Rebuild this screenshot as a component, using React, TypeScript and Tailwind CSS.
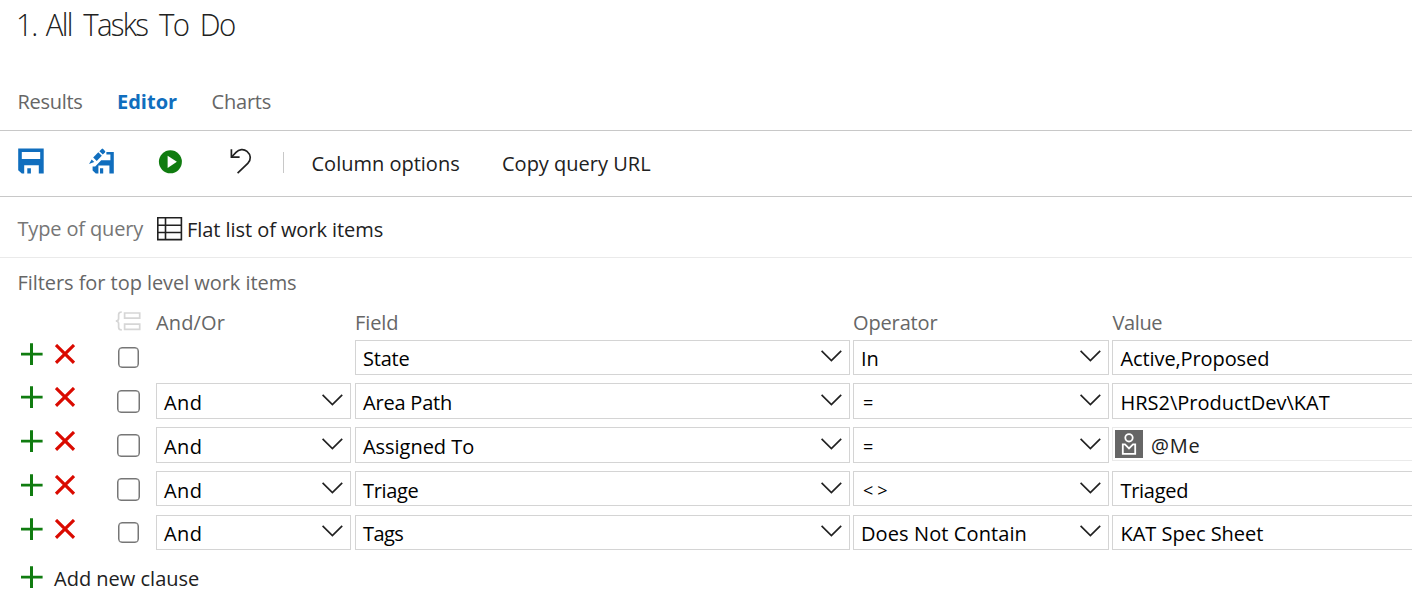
import React from "react";

type Text = { text: string; className?: string };
type Clause = {
  height: string;
  box: string;
  line: string;
  check: string;
  logical?: Text;
  field: Text;
  operator: Text;
  value: Text;
  person?: boolean;
};

const TALL = { box: "h-[36px]", line: "pt-px", check: "ml-[42px] size-[23px]" };
const SHORT = { box: "h-[35px]", line: "", check: "ml-[43px] size-[21px]" };
const AND: Text = { text: "And", className: "tracking-[0.4px]" };

const clauses: Clause[] = [
  {
    height: "h-[43px]",
    ...SHORT,
    field: { text: "State", className: "tracking-[-0.2px]" },
    operator: { text: "In" },
    value: { text: "Active,Proposed", className: "tracking-[-0.1px]" },
  },
  {
    height: "h-[44px]",
    ...TALL,
    logical: AND,
    field: { text: "Area Path", className: "tracking-[-0.2px]" },
    operator: { text: "=", className: "pl-[2px] text-[18px]" },
    value: { text: "HRS2\\ProductDev\\KAT", className: "tracking-[0px]" },
  },
  {
    height: "h-[44px]",
    ...TALL,
    logical: AND,
    field: { text: "Assigned To", className: "tracking-[-0.04px]" },
    operator: { text: "=", className: "pl-[2px] text-[18px]" },
    value: { text: "@Me", className: "tracking-[0.8px]" },
    person: true,
  },
  {
    height: "h-[44px]",
    ...TALL,
    box: "h-[35px]",
    logical: AND,
    field: { text: "Triage", className: "tracking-[-0.35px]" },
    operator: { text: "<>", className: "pl-[2px] text-[18px] tracking-[4px]" },
    value: { text: "Triaged", className: "tracking-[-0.3px]" },
  },
  {
    height: "h-[44px]",
    ...SHORT,
    logical: AND,
    field: { text: "Tags", className: "tracking-[-0.6px]" },
    operator: { text: "Does Not Contain", className: "tracking-[0.1px]" },
    value: { text: "KAT Spec Sheet", className: "tracking-[-0.02px]" },
  },
];

function SaveIcon() {
  return (
    <svg width="26" height="26" viewBox="0 0 26 26" className="block shrink-0">
      <path
        fillRule="evenodd"
        fill="#106ebe"
        d="M0.2 0.4H25.7V25.6H20.8V17.2H6.2V25.6H3.8L0.2 22.2ZM3.8 3.9V11H22.2V3.9ZM9.3 20.2H12.9V25.6H9.3Z"
      />
    </svg>
  );
}

function SaveAsIcon() {
  return (
    <svg width="26" height="26" viewBox="0 0 26 26" className="block shrink-0">
      <g fill="#106ebe">
        <path
          fillRule="evenodd"
          d="M17.4 4H24.8V25.6H20.4V17.6H9.4V25.6H6.8L3.6 22.4V18.6H6.2L12.2 12.2H21.4V6.6H17.4ZM11 20.2H14.2V25.6H11Z"
        />
        <path d="M4.2 9.4L9.3 4.3L12.8 7.8L7.7 12.9Z" />
        <path d="M10.4 3.2L12.7 0.9Q13.4 0.3 14.1 1L16 2.9Q16.7 3.6 16 4.4L13.8 6.6Z" />
        <path d="M2.7 11.4L5.3 14L0 15.9Z" />
      </g>
    </svg>
  );
}

function RunIcon() {
  return (
    <svg width="24" height="24" viewBox="0 0 24 24" className="block shrink-0">
      <circle cx="12.4" cy="11.8" r="11.5" fill="#107c10" />
      <path d="M9.6 5.7L18.9 11.8L9.6 17.9Z" fill="#fff" />
    </svg>
  );
}

function UndoIcon() {
  return (
    <svg width="22" height="26" viewBox="0 0 22 26" className="block shrink-0" fill="none" stroke="#212121" strokeWidth="1.7">
      <path d="M1.4 1.2V9.2H9.6" />
      <path d="M1.6 9L6 4.4C9 1.2 13.6 0.6 17 3.3C21.2 6.8 21.2 12 17.8 15.4L7.6 25.2" />
    </svg>
  );
}

function ListIcon() {
  return (
    <svg width="26" height="24" viewBox="0 0 26 24" className="block shrink-0" fill="none" stroke="#212121" strokeWidth="1.6">
      <path d="M0.8 0.8H24.4V22.6H0.8ZM8.5 0.8V22.6M0.8 8.2H24.4M0.8 15.5H24.4" />
    </svg>
  );
}

function GroupIcon() {
  return (
    <svg width="26" height="20" viewBox="0 0 26 20" className="block shrink-0" fill="none" stroke="#d6d6d6" strokeWidth="1.7">
      <path d="M9.6 2H24.7V7.2H9.6ZM9.6 13.2H24.7V18.4H9.6Z" />
      <path d="M6.8 1C4.4 1 3.6 1.8 3.6 3.6V7.4C3.6 9 3 9.9 0.8 10C3 10.1 3.6 11 3.6 12.6V16.2C3.6 18 4.4 18.9 6.8 18.9" />
    </svg>
  );
}

function PlusIcon() {
  return (
    <svg width="22" height="22" viewBox="0 0 22 22" className="block shrink-0">
      <path d="M9 0.3H12V9.7H21.6V12.5H12V21.9H9V12.5H0V9.7H9Z" fill="#107c10" />
    </svg>
  );
}

function RemoveIcon() {
  return (
    <svg width="20" height="20" viewBox="0 0 20 20" className="block shrink-0">
      <path d="M1 1L19 18.8M19 1L1 18.8" stroke="#da0a00" strokeWidth="3.1" />
    </svg>
  );
}

function Chevron() {
  return (
    <svg width="21" height="12" viewBox="0 0 21 12" className="mt-[9px] block shrink-0">
      <path d="M0.6 0.8L10.4 10.5L20.2 0.8" fill="none" stroke="#212121" strokeWidth="1.7" />
    </svg>
  );
}

function PersonIcon() {
  return (
    <svg width="28" height="28" viewBox="0 0 28 28" className="block shrink-0 bg-[#666]" fill="none" stroke="#fff" strokeWidth="1.8">
      <circle cx="14" cy="7.8" r="3.7" />
      <path d="M7.8 14.4H10L14 18.4L18 14.4H20.2V23.8H7.8Z" />
    </svg>
  );
}

function Select({ item, width, clause }: { item: Text; width: string; clause: Clause }) {
  return (
    <div className={`flex shrink-0 items-start justify-between border border-[#d4d4d4] pr-[7px] pl-[7px] ${width} ${clause.box} ${clause.line}`}>
      <span className={`leading-[35px] ${item.className ?? ""}`}>{item.text}</span>
      <Chevron />
    </div>
  );
}

function ClauseRow({ clause }: { clause: Clause }) {
  return (
    <div className={`flex items-start ${clause.height}`}>
      <div className="flex w-[156px] shrink-0 items-start pl-[21px]">
        <button className="mt-[3px]" aria-label="Insert clause"><PlusIcon /></button>
        <button className="mt-[4px] ml-[12px]" aria-label="Remove clause"><RemoveIcon /></button>
        <span className={`mt-[7px] shrink-0 rounded-[4px] border-[1.5px] border-[#767676] shadow-[inset_0_0_0_0.5px_#767676] ${clause.check}`} />
      </div>
      <div className="w-[199px] shrink-0">
        {clause.logical && <Select item={clause.logical} width="w-[195px]" clause={clause} />}
      </div>
      <Select item={clause.field} width="w-[495px]" clause={clause} />
      <div className="ml-[3px] flex shrink-0 items-start">
        <Select item={clause.operator} width="w-[256px]" clause={clause} />
      </div>
      {clause.person ? (
        <div className="ml-[3px] flex h-[34px] grow items-start border border-r-0 border-[#eaeaea] pt-[2px] pl-[2px] text-[#212121]">
          <PersonIcon />
          <span className={`-mt-[2px] ml-[8px] leading-[35px] ${clause.value.className}`}>{clause.value.text}</span>
        </div>
      ) : (
        <div className={`ml-[3px] grow border border-r-0 border-[#d4d4d4] pl-[7.5px] ${clause.box} ${clause.line}`}>
          <span className={`block leading-[35px] ${clause.value.className}`}>{clause.value.text}</span>
        </div>
      )}
    </div>
  );
}

export default function App() {
  return (
    <main className="h-[606px] w-full overflow-hidden bg-white font-['Open_Sans','Noto_Sans',sans-serif] text-[20px] leading-[28px] whitespace-nowrap text-black">
      <header className="flex h-[131px] flex-col border-b border-[#c8c8c8]">
        <h1 className="h-[88px] w-[300px] origin-top-left scale-x-[0.92] pt-[2px] pl-[17.5px] text-[32px] leading-[44px] font-light tracking-[-1.9px] text-[#212121] [word-spacing:6.3px]">
          1. <span className="-ml-[2.5px]">All Tasks To Do</span>
        </h1>
        <nav className="flex text-[#666]">
          <a className="w-[99px] pl-[17.5px] tracking-[-0.3px]">Results</a>
          <a className="w-[94px] pl-[18px] font-bold tracking-[0px] text-[#106ebe]">Editor</a>
          <a className="pl-[18.5px] tracking-[-0.2px]">Charts</a>
        </nav>
      </header>

      <div className="flex h-[66px] items-start border-b border-[#c8c8c8] pl-[18px] text-[#212121]">
        <button className="mt-[17px]" aria-label="Save query"><SaveIcon /></button>
        <button className="mt-[17px] ml-[45px]" aria-label="Save as"><SaveAsIcon /></button>
        <button className="mt-[19px] ml-[43px]" aria-label="Run query"><RunIcon /></button>
        <button className="mt-[17px] ml-[48px]" aria-label="Revert changes"><UndoIcon /></button>
        <span className="mt-[21px] ml-[31px] h-[21px] w-px bg-[#c8c8c8]" />
        <button className="mt-[19px] ml-[27.5px] w-[190.5px] text-left tracking-[0px]">Column options</button>
        <button className="mt-[19px] tracking-[0px]">Copy query URL</button>
      </div>

      <div className="flex h-[61px] items-start border-b border-[#eaeaea] pl-[17.5px]">
        <span className="mt-[18px] w-[139.5px] tracking-[-0.15px] text-[#767676]">Type of query</span>
        <span className="mt-[20px]"><ListIcon /></span>
        <span className="mt-[19px] ml-[4px] tracking-[-0.06px] text-[#212121]">Flat list of work items</span>
      </div>

      <section>
        <h2 className="h-[53px] pt-[11px] pl-[17.5px] tracking-[-0.06px] text-[#666]">Filters for top level work items</h2>
        <div className="flex h-[29px] items-start text-[#666]">
          <span className="w-[156px] pl-[115px]"><GroupIcon /></span>
          <span className="-mt-[2px] w-[199px] tracking-[0.15px]">And/Or</span>
          <span className="-mt-[2px] w-[498px] tracking-[-0.1px]">Field</span>
          <span className="-mt-[2px] w-[259.5px] tracking-[-0.14px]">Operator</span>
          <span className="-mt-[2px] tracking-[-0.4px]">Value</span>
        </div>
        {clauses.map((clause) => (
          <ClauseRow key={clause.field.text} clause={clause} />
        ))}
        <button className="flex items-start pt-[7px] pl-[21px] text-[#212121]">
          <PlusIcon />
          <span className="-mt-[1px] ml-[11px]">Add new clause</span>
        </button>
      </section>
    </main>
  );
}
